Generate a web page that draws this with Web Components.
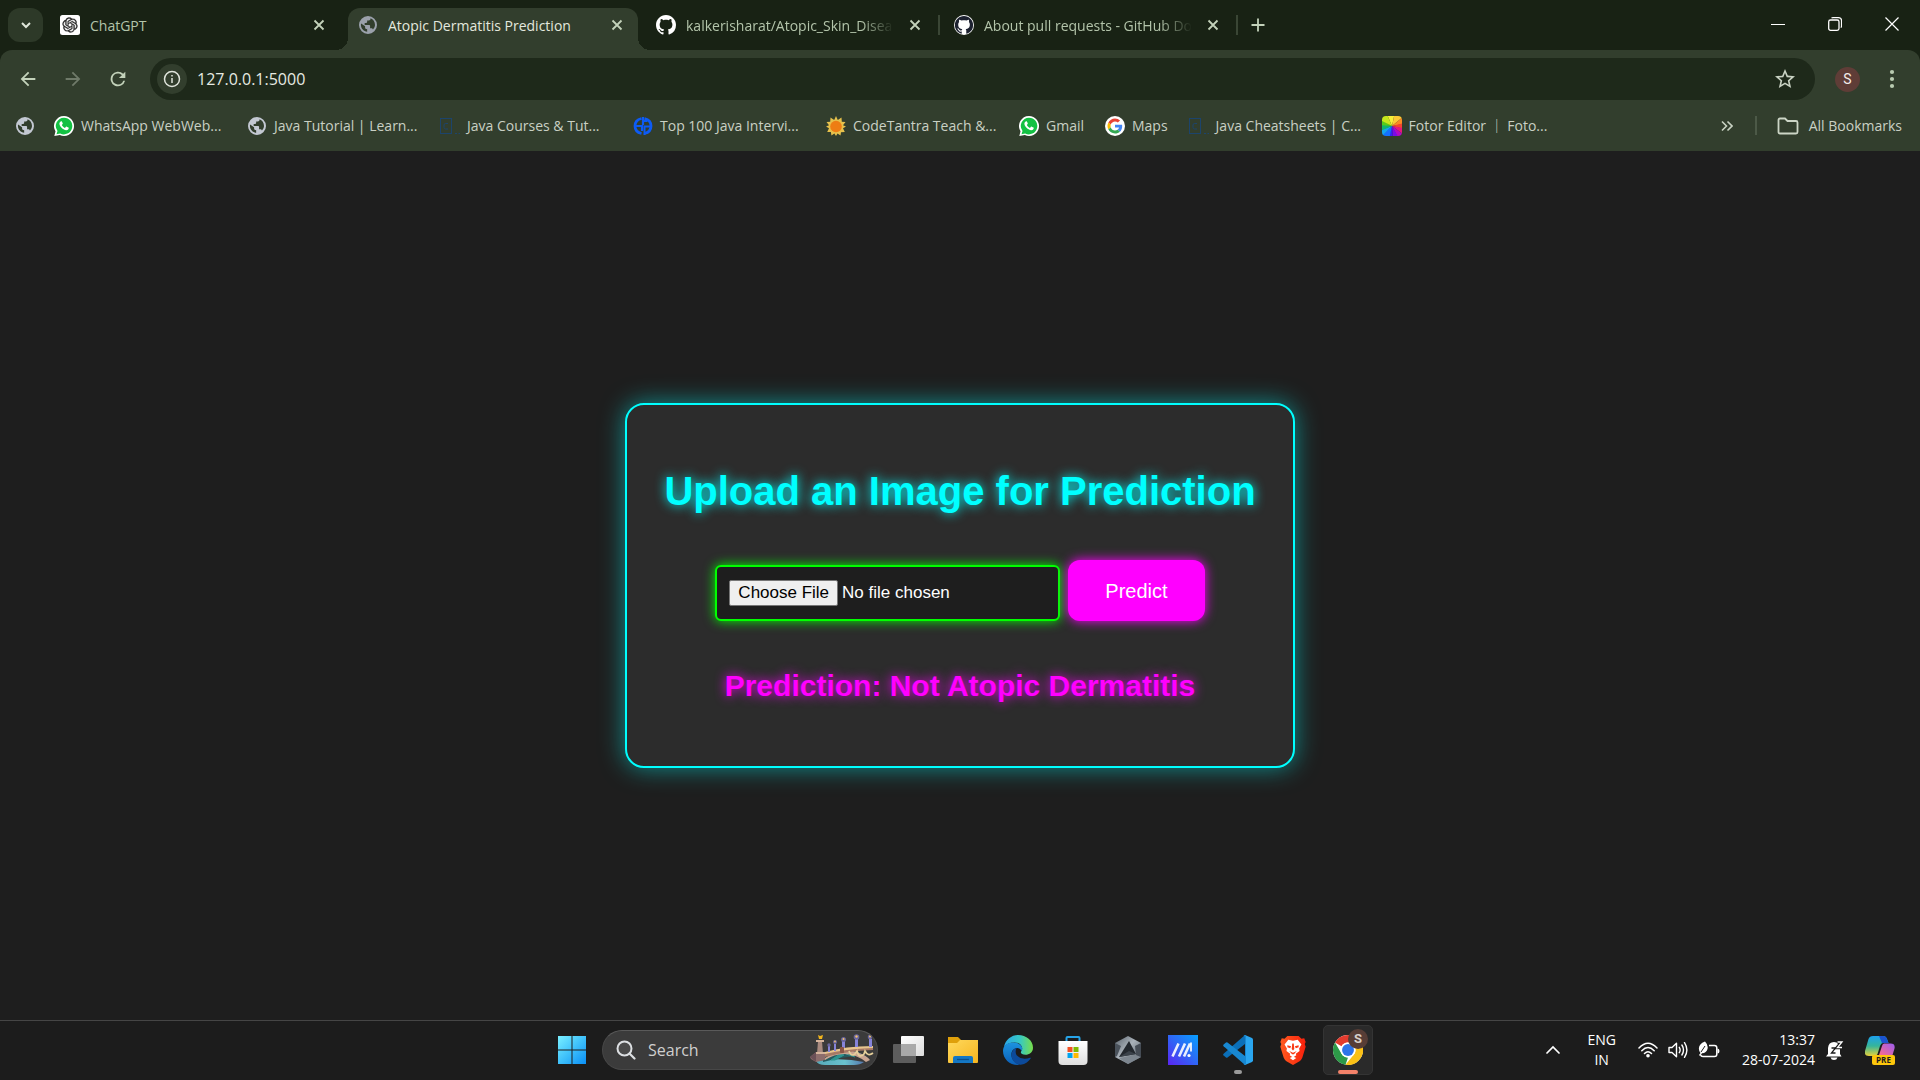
<!DOCTYPE html>
<html lang="en">
<head>
<meta charset="utf-8">
<title>Atopic Dermatitis Prediction</title>
<style>
  html, body { height: 100%; margin: 0; }
  body { background: #1e1e1e; font-family: "Open Sans", "Noto Sans", "Noto Sans CJK SC", sans-serif; font-size: 14px; }
</style>
</head>
<body>
<desktop-screen></desktop-screen>
<script>
const GITHUB = 'M8 0C3.58 0 0 3.58 0 8c0 3.54 2.29 6.53 5.47 7.59.4.07.55-.17.55-.38 0-.19-.01-.82-.01-1.49-2.01.37-2.53-.49-2.69-.94-.09-.23-.48-.94-.82-1.13-.28-.15-.68-.52-.01-.53.63-.01 1.08.58 1.23.82.72 1.21 1.87.87 2.33.66.07-.52.28-.87.51-1.07-1.78-.2-3.64-.89-3.64-3.95 0-.87.31-1.59.82-2.15-.08-.2-.36-1.02.08-2.12 0 0 .67-.21 2.2.82.64-.18 1.32-.27 2-.27.68 0 1.36.09 2 .27 1.53-1.04 2.2-.82 2.2-.82.44 1.1.16 1.92.08 2.12.51.56.82 1.27.82 2.15 0 3.07-1.87 3.75-3.65 3.95.29.25.54.73.54 1.48 0 1.07-.01 1.93-.01 2.2 0 .21.15.46.55.38A8.013 8.013 0 0016 8c0-4.42-3.58-8-8-8z';
const GLOBE = '<path d="M12 1.200a10.800 10.800 0 1 0 0 21.600a10.800 10.800 0 1 0 0-21.600zm-1 19c-3.950-.49-7.500-3.850-7.500-8.200 0-.62.08-1.210.21-1.790L8.500 13.500v1.500c0 1.100.9 2 2.500 2v3.200zm6.900-2.800c-.26-.81-1-1.390-1.900-1.390h-1.500v-3c0-.55-.45-1-1-1H8v-2.500h2c.55 0 1-.45 1-1V6.500h2c1.100 0 2-.9 2-2v-.6c3.300 1.200 5.400 4.500 5.400 8 0 2.080-1.200 4.100-2.500 5.500z"/>';
const ICONS = {
  chevdown: ['0 0 12 12', '<path d="M2 4l4 4 4-4" fill="none" stroke="#dfe6da" stroke-width="2"/>'],
  close: ['0 0 12 12', '<path d="M1.500 1.500l9 9M10.500 1.500l-9 9" stroke="currentColor" stroke-width="1.800"/>'],
  plus: ['0 0 14 14', '<path d="M7 .5v13M.5 7h13" stroke="#c3d2ba" stroke-width="1.800"/>'],
  openai: ['0 0 24 24', '<rect width="24" height="24" rx="3" fill="#fff"/><g transform="translate(3 3) scale(.75)"><path fill="#222" stroke="#222" stroke-width=".5" d="M22.2819 9.8211a5.9847 5.9847 0 0 0-.5157-4.9108 6.0462 6.0462 0 0 0-6.5098-2.9A6.0651 6.0651 0 0 0 4.9807 4.1818a5.9847 5.9847 0 0 0-3.9977 2.9 6.0462 6.0462 0 0 0 .7427 7.0966 5.98 5.98 0 0 0 .511 4.9107 6.051 6.051 0 0 0 6.5146 2.9001A5.9847 5.9847 0 0 0 13.2599 24a6.0557 6.0557 0 0 0 5.7718-4.2058 5.9894 5.9894 0 0 0 3.9977-2.9001 6.0557 6.0557 0 0 0-.7475-7.0729zm-9.022 12.6081a4.4755 4.4755 0 0 1-2.8764-1.0408l.1419-.0804 4.7783-2.7582a.7948.7948 0 0 0 .3927-.6813v-6.7369l2.02 1.1686a.071.071 0 0 1 .038.052v5.5826a4.504 4.504 0 0 1-4.4945 4.4944zm-9.6607-4.1254a4.4708 4.4708 0 0 1-.5346-3.0137l.142.0852 4.783 2.7582a.7712.7712 0 0 0 .7806 0l5.8428-3.3685v2.3324a.0804.0804 0 0 1-.0332.0615L9.74 19.9502a4.4992 4.4992 0 0 1-6.1408-1.6464zM2.3408 7.8956a4.485 4.485 0 0 1 2.3655-1.9728V11.6a.7664.7664 0 0 0 .3879.6765l5.8144 3.3543-2.0201 1.1685a.0757.0757 0 0 1-.071 0l-4.8303-2.7865A4.504 4.504 0 0 1 2.3408 7.872zm16.5963 3.8558L13.1038 8.364 15.1192 7.2a.0757.0757 0 0 1 .071 0l4.8303 2.7913a4.4944 4.4944 0 0 1-.6765 8.1042v-5.6772a.79.79 0 0 0-.407-.667zm2.0107-3.0231l-.142-.0852-4.7735-2.7818a.7759.7759 0 0 0-.7854 0L9.409 9.2297V6.8974a.0662.0662 0 0 1 .0284-.0615l4.8303-2.7866a4.4992 4.4992 0 0 1 6.6802 4.66zM8.3065 12.863l-2.02-1.1638a.0804.0804 0 0 1-.038-.0567V6.0742a4.4992 4.4992 0 0 1 7.3757-3.4537l-.142.0805L8.704 5.459a.7948.7948 0 0 0-.3927.6813zm1.0976-2.3654l2.602-1.4998 2.6069 1.4998v2.9994l-2.5974 1.4997-2.6067-1.4997Z"/></g>'],
  globe: ['0 0 24 24', '<g fill="#c3c8d2">' + GLOBE + '</g>'],
  globedim: ['0 0 24 24', '<g fill="#9ba1ab">' + GLOBE + '</g>'],
  github: ['0 0 16 16', '<path fill="#fff" d="' + GITHUB + '"/>'],
  githubdocs: ['0 0 16 16', '<circle cx="8" cy="8" r="8" fill="#fff"/><g transform="translate(.7 .7) scale(.9125)"><path fill="#1c2130" d="' + GITHUB + '"/></g>'],
  back: ['0 0 24 24', '<path fill="#c3d2ba" d="M20 11H7.830l5.590-5.590L12 4l-8 8 8 8 1.410-1.410L7.830 13H20z"/>'],
  forward: ['0 0 24 24', '<path fill="#6f7a69" d="M4 11h12.170l-5.590-5.590L12 4l8 8-8 8-1.410-1.410L16.170 13H4z"/>'],
  reload: ['0 0 24 24', '<path fill="#c3d2ba" d="M17.650 6.350A8 8 0 1 0 19.730 14h-2.080A6 6 0 1 1 12 6c1.660 0 3.140.69 4.220 1.780L13 11h7V4z"/>'],
  info: ['0 0 18 18', '<circle cx="9" cy="9" r="7.500" fill="none" stroke="#e0e5dc" stroke-width="1.500"/><path d="M9 8v5M9 5v1.600" stroke="#e0e5dc" stroke-width="1.500"/>'],
  star: ['0 0 24 24', '<path fill="#c9d2c3" d="M22 9.240l-7.190-.62L12 2 9.190 8.630 2 9.240l5.460 4.730L5.820 21 12 17.270 18.180 21l-1.630-7.030zM12 15.400l-3.760 2.270 1-4.280-3.320-2.880 4.380-.38L12 6.100l1.710 4.040 4.380.38-3.320 2.880 1 4.280z"/>'],
  dots: ['0 0 22 22', '<g fill="#b9cbb0"><circle cx="11" cy="4" r="2.100"/><circle cx="11" cy="11" r="2.100"/><circle cx="11" cy="18" r="2.100"/></g>'],
  minimize: ['0 0 14 14', '<path d="M0 7.500h14" stroke="#fff" stroke-width="1"/>'],
  restore: ['0 0 14 14', '<rect x=".7" y="3" width="10.300" height="10.300" rx="1.800" fill="none" stroke="#fff" stroke-width="1.300"/><path d="M3.500 1.200q.6-.6 1.500-.6h5.500q3 0 3 3V9q0 1-.7 1.600" fill="none" stroke="#fff" stroke-width="1.200"/>'],
  winclose: ['0 0 14 14', '<path d="M.5.5l13 13M13.500.5l-13 13" stroke="#fff" stroke-width="1.200"/>'],
  whatsapp: ['0 0 24 24', '<path fill="#fff" d="M12 0a12 12 0 1 1-5 22.900L.4 24l1.400-5.800A12 12 0 0 1 12 0z"/><path fill="#13c143" d="M12 2a10 10 0 1 1-4.600 18.900L3 22l1.200-4A10 10 0 0 1 12 2z"/><path fill="#fff" d="M8.400 6.300c.5-.2 1 0 1.200.5l.9 2c.1.3 0 .7-.2.9l-.9 1.100c.9 1.700 2.100 2.800 3.800 3.500l1.100-1.300c.2-.3.6-.3.900-.2l2.100 1c.4.200.5.5.4.900-.3 1.500-1.400 2.400-2.900 2.400-2 0-4.700-1.400-6.300-3.500-1.400-1.700-2.100-3.300-2-4.500.1-1.200.8-2.300 1.900-2.800z"/>'],
  javabox: ['0 0 20 20', '<g fill="none" stroke="#1c446c" stroke-width="1"><rect x=".5" y="2.500" width="11" height="15"/><path d="M8 7.500H5.500q-1.500 0-1.500 1.500v2.500q0 1.500 1.500 1.500H8"/><path d="M15 17.500h2M18.500 17.500h1.500"/></g>'],
  top100: ['0 0 20 20', '<g fill="none" stroke="#0d5bf5" stroke-width="2.800"><path d="M8.500 2.500Q2 4 2 10t6.500 7.500M11.500 2.500Q18 4 18 10t-6.500 7.500"/><path d="M10 1v8M3 10h6v5" stroke-width="2.200"/><path d="M11.500 19v-8.500H17M10.500 5h4" stroke-width="2"/></g>'],
  sun: ['0 0 20 20', '<path fill="#e6c14c" d="M10 0l1.800 4L15.500 1.500l.3 4.200 3.700.3-2.500 3.200L20 10.500l-3 1.800 1.800 3.700-3.800.2-.5 3.300-3-2L10 20l-1.600-2.600-3 2-.5-3.300-3.700-.2L3 12.300 0 10.500l3-1.300L.5 6l3.700-.3.3-4.200L8.200 4z"/><circle cx="10" cy="10.500" r="5.800" fill="#ee7d14"/>'],
  google: ['0 0 48 48', '<circle cx="24" cy="24" r="24" fill="#fff"/><g transform="translate(6 6) scale(.75)"><path fill="#EA4335" d="M24 9.500c3.540 0 6.710 1.220 9.210 3.600l6.850-6.850C35.900 2.380 30.470 0 24 0 14.620 0 6.510 5.380 2.560 13.220l7.980 6.190C12.430 13.720 17.740 9.500 24 9.500z"/><path fill="#4285F4" d="M46.980 24.550c0-1.570-.15-3.090-.38-4.550H24v9.020h12.940c-.58 2.960-2.260 5.480-4.780 7.180l7.730 6c4.510-4.180 7.090-10.360 7.090-17.650z"/><path fill="#FBBC05" d="M10.530 28.590c-.48-1.450-.76-2.990-.76-4.590s.27-3.140.76-4.590l-7.980-6.190C.92 16.460 0 20.120 0 24c0 3.880.92 7.540 2.560 10.780z"/><path fill="#34A853" d="M24 48c6.480 0 11.930-2.130 15.890-5.810l-7.730-6c-2.150 1.450-4.920 2.300-8.160 2.300-6.260 0-11.570-4.220-13.470-9.910l-7.980 6.190C6.510 42.620 14.620 48 24 48z"/></g>'],
  fotor: ['0 0 20 20', '<defs><clipPath id="r"><rect width="20" height="20" rx="4"/></clipPath></defs><g clip-path="url(#r)"><path fill="#f6ee38" d="M10 10L4-4h9z"/><path fill="#fcc935" d="M10 10l3-14h7l2 4z"/><path fill="#fb8b24" d="M10 10L22 0v8z"/><path fill="#f4452f" d="M10 10l12-3v6z"/><path fill="#e5187c" d="M10 10l12 2v7z"/><path fill="#b409c4" d="M10 10l12 9-5 5z"/><path fill="#7a0be8" d="M10 10l8 14h-7z"/><path fill="#3a1cf5" d="M10 10l1 14H6z"/><path fill="#1470ff" d="M10 10L7 24l-9-3z"/><path fill="#14a4f0" d="M10 10L-2 22v-8z"/><path fill="#11b56c" d="M10 10l-12 5V8z"/><path fill="#55cc1c" d="M10 10L-2 9V3z"/><path fill="#c6e71c" d="M10 10L-2 4v-6l6-2z"/></g>'],
  more: ['0 0 12 12', '<path d="M1 1.500L5.500 6 1 10.500M6.500 1.500L11 6l-4.500 4.500" fill="none" stroke="#c9d2c3" stroke-width="1.600"/>'],
  folderline: ['0 0 22 18', '<path d="M1.500 3q0-1.500 1.500-1.500h5L10.500 4H19q1.500 0 1.500 1.500V15q0 1.500-1.500 1.500H3q-1.500 0-1.500-1.500z" fill="none" stroke="#ccd5c6" stroke-width="1.800"/>'],
  windows: ['0 0 30 30', '<defs><linearGradient id="w" x1="0" y1="0" x2="1" y2="1"><stop offset="0" stop-color="#7af0ff"/><stop offset=".5" stop-color="#3fc1fb"/><stop offset="1" stop-color="#0a8ff5"/></linearGradient></defs><path fill="url(#w)" d="M1 1h13.500v13.500H1zM15.500 1H29v13.500H15.500zM1 15.500h13.500V29H1zM15.500 15.500H29V29H15.500z"/>'],
  search: ['0 0 20 20', '<circle cx="8.500" cy="8.500" r="7" fill="#4a4a4a" stroke="#dcdfe2" stroke-width="2"/><path d="M13.500 13.500l5 5" stroke="#dcdfe2" stroke-width="2.200" stroke-linecap="round"/>'],
  bridge: ['0 0 64 32', '<defs><linearGradient id="b" x1="0" x2="1"><stop offset="0" stop-color="#56a9b8"/><stop offset=".6" stop-color="#6ac3cf"/><stop offset="1" stop-color="#5577ae"/></linearGradient></defs><path d="M6 27q26-4 48 1q-4 3-10 3H15q-7 0-9-4z" fill="url(#b)"/><path d="M13 25q14-10 34-8l10 6q-14-3-44 5z" fill="#245b60"/><path d="M21 26l9-6 4 1-9 5zM36 20l9 3" fill="#2e9590" stroke="#2e9590"/><path d="M0 23l6-5h9v8l-9 2-5-3z" fill="#8d6d6c"/><path d="M0 23l6-5v10z" fill="#6b5057"/><path d="M15 24q16-10 32-6 9 3 13 8l-4 2q-10-8-22-8-10 0-19 6z" fill="#c9a592"/><path d="M15 18q20-6 48-6v3q-26 0-48 6z" fill="#e8c58e"/><path d="M15 20q20-5 48-6v2q-26 1-48 7z" fill="#a77964"/><path d="M39 17q2 6 6 3l2-3q2 8 7 3l1-3q3 6 8 2" fill="none" stroke="#e5cf9a" stroke-width="1.700"/><path d="M8 7h4l1 13H7z" fill="#a98a7f"/><path d="M6 6h8v2H6zM6 18h9v2H6z" fill="#d5b39b"/><path d="M8 1l2 1 3-1-1 4H9z" fill="#f2b51d"/><g fill="#8583d8"><path d="M18 12h2v6h-2zM24 10h2v7h-2zM32 7h3v7h-3zM45 5h3v8h-3zM59 5h3v8h-3z"/></g><g fill="#69669f"><circle cx="19" cy="11" r="1.700"/><circle cx="25" cy="8" r="2"/><circle cx="33.500" cy="5.500" r="2.500"/><circle cx="46.500" cy="3" r="2.800"/><circle cx="60" cy="3" r="2.300"/></g><g fill="#f1c06a"><circle cx="25" cy="7.500" r=".9"/><circle cx="33.500" cy="5" r="1"/><circle cx="46.500" cy="2.500" r="1.200"/><circle cx="60" cy="2.500" r="1"/></g><rect x="30" y="13" width="4" height="6" rx="1" fill="#8a5546"/>'],
  taskview: ['0 0 32 32', '<defs><linearGradient id="t" x1="0" y1="0" x2="1" y2="1"><stop offset="0" stop-color="#fff"/><stop offset="1" stop-color="#dcdcdc"/></linearGradient></defs><rect x="9" y="2" width="23" height="20" rx="1" fill="url(#t)"/><rect x="1" y="10" width="23" height="19" rx="1" fill="#5d5d5d"/><path d="M9 10h15v12H9z" fill="#a9a9a9"/>'],
  explorer: ['0 0 30 30', '<defs><linearGradient id="e" x1="0" y1="0" x2="1" y2="1"><stop offset="0" stop-color="#ffd95c"/><stop offset="1" stop-color="#f6b520"/></linearGradient></defs><path fill="#dfa00b" d="M0 2h10l3 3v6H0z"/><path fill="url(#e)" d="M0 8h9l3-3h18v22q0 1-1 1H1q-1 0-1-1z"/><path fill="#1477c4" d="M5 28v-5q0-2 2-2h16q2 0 2 2v5z"/><path d="M9 24.500h12" stroke="#0a4f8d" stroke-width="1.300"/>'],
  edge: ['0 0 32 32', '<defs><linearGradient id="g1" x1="0" x2="1"><stop offset="0" stop-color="#2aa5e8"/><stop offset=".55" stop-color="#36c8c4"/><stop offset="1" stop-color="#78de4a"/></linearGradient><linearGradient id="g2" x1="0" y1="0" x2="0" y2="1"><stop offset="0" stop-color="#1c93df"/><stop offset="1" stop-color="#0b5fb8"/></linearGradient></defs><path fill="url(#g1)" d="M1 13C2.500 5 9 0 16 0c9 0 16 6 16 13.500 0 5-4 7.500-8 7.500-3 0-5-1.200-5-2.500 0-1 1.500-1.500 1.500-4 0-3.500-3.500-6.500-8-6.500C7 8 3 10 1 13z"/><path fill="url(#g2)" d="M0 17C0 11 5 8 11 8c5 0 9.500 3 9.500 6.500 0 1-.3 2-1 2.500C18 12 9 13 9 21c0 5 4 9 9 10.800C8 33 0 26 0 17z"/><path fill="#0c4a9a" d="M15 13.500c-4 1-6 4-6 7.500 0 6 5 11 10 10.700 5-.7 8.500-3.600 10.500-6.700.4-.7-.2-1-.7-.7C22 27 14 24.500 13.500 18c0-2 .5-3.500 1.500-4.500z"/>'],
  store: ['0 0 30 30', '<defs><linearGradient id="s" x1="0" y1="0" x2="0" y2="1"><stop offset="0" stop-color="#fff"/><stop offset="1" stop-color="#dedede"/></linearGradient></defs><path d="M8.500 7V3q0-1 1-1h11q1 0 1 1v4" fill="none" stroke="#27a4e8" stroke-width="2"/><path fill="url(#s)" d="M.5 6h29v20q0 4-4 4h-21q-4 0-4-4z"/><path fill="#f25022" d="M9.500 12h5v5h-5z"/><path fill="#7fba00" d="M15.500 12h5v5h-5z"/><path fill="#00a4ef" d="M9.500 18h5v5h-5z"/><path fill="#ffb900" d="M15.500 18h5v5h-5z"/>'],
  armoury: ['0 0 28 28', '<defs><linearGradient id="a" x1="0" y1="0" x2="1" y2="1"><stop offset="0" stop-color="#59626b"/><stop offset=".45" stop-color="#aab2ba"/><stop offset="1" stop-color="#4a525b"/></linearGradient></defs><path fill="url(#a)" d="M14 0l13 7v14l-13 7-13-7V7z"/><path fill="#4a525b" d="M1 7l6 3-4 10-2 1z"/><path fill="#23282e" d="M15 5l7 13-17 3z"/><path fill="#3b424a" d="M5 21l10-6 7 3z"/><path fill="#7d868f" d="M5 22l17-3 5 2-13 7z"/><path fill="#454c55" d="M21 10l6-3v14l-5-2z"/>'],
  myasus: ['0 0 30 30', '<defs><linearGradient id="m" x1="0" y1="1" x2="1" y2="0"><stop offset="0" stop-color="#5b24f2"/><stop offset=".55" stop-color="#2b6cf6"/><stop offset="1" stop-color="#06a0ff"/></linearGradient></defs><path fill="url(#m)" d="M0 0h30v30H0z"/><path d="M4.500 21.500l6-13M11 21.500l6-13M16 21.500l6-13" stroke="#fff" stroke-width="2.600" opacity=".9"/><path d="M22 7.500h2v9h-2z" fill="#fff" opacity=".85"/><circle cx="21" cy="20.500" r="1.600" fill="#fff"/>'],
  vscode: ['0 0 30 30', '<path fill="#0b6fb8" d="M22 0v9L4.500 22.500q-.8.5-1.500 0L.6 20.600q-.9-.9 0-1.800z"/><path fill="#1888d2" d="M22 30v-9L4.500 7.500Q3.700 7 3 7.500L.6 9.400q-.9.900 0 1.800z"/><path fill="#2aa6f0" d="M22 0l7 3q1 .5 1 1.700v20.600q0 1.200-1 1.700l-7 3z"/><path fill="#1888d2" d="M20.500 29.500Q22 29 22 27V3q0-2-1.500-2.500L22 0l1 1v28l-1 1z"/>'],
  brave: ['0 0 28 32', '<defs><linearGradient id="v" x1="0" x2="1"><stop offset="0" stop-color="#ff5a1f"/><stop offset="1" stop-color="#f8200c"/></linearGradient></defs><path fill="url(#v)" d="M8 1h12l3 3 3-.5 1.500 4-1 2 1 3L24 24q-1 2.500-3 4l-7 4-7-4q-2-1.500-3-4L.5 12.500l1-3-1-2L2 3.500 5 4z"/><path fill="#fff" d="M14 6l5-1 4 5-2.500 4.500.5 2.500-4 3 .5 1.500L14 24l-3.500-2.500.5-1.500-4-3 .5-2.500L5 10l4-5z"/><path fill="#f93a14" d="M8 11l4 1-1 2-3-1zM20 11l-4 1 1 2 3-1zM13.200 9h1.600l.6 6-1.400 1.500-1.400-1.500zM10 17l4 2 4-2-3 3.500h-2z"/><path fill="#fff" d="M10.500 24.500l3.500-1.500 3.500 1.500L14 27z"/>'],
  chrome: ['0 0 48 48', '<circle cx="24" cy="24" r="24" fill="#fff"/><path fill="#e33b2e" d="M24 0a24 24 0 0 1 20.800 12H24a12 12 0 0 0-10.400 6L3.200 12A24 24 0 0 1 24 0z"/><path fill="#2d9a48" d="M3.200 12l10.400 18A12 12 0 0 0 24 36l-4 11.700A24 24 0 0 1 3.200 12z"/><path fill="#fbc116" d="M44.800 12A24 24 0 0 1 20 47.700L34.400 30a12 12 0 0 0 0-12L32 12z"/><circle cx="24" cy="24" r="12" fill="#fff"/><circle cx="24" cy="24" r="9.500" fill="#2d74ea"/>'],
  chevup: ['0 0 14 14', '<path d="M1 10l6-6 6 6" fill="none" stroke="#fff" stroke-width="1.700" stroke-linecap="round"/>'],
  wifi: ['0 0 20 16', '<g fill="none" stroke="#fff" stroke-width="1.500" stroke-linecap="round"><path d="M1 6q9-9.500 18 0M3.800 8.800q6.200-6.500 12.400 0M6.500 11.500q3.500-3.500 7 0"/></g><circle cx="10" cy="13.800" r="1.800" fill="#fff"/>'],
  speaker: ['0 0 20 18', '<g fill="none" stroke="#fff" stroke-width="1.400" stroke-linecap="round" stroke-linejoin="round"><path d="M1 6.500h3l4.500-4.300v13.600L4 11.500H1zM11.300 6.300q1.700 2.700 0 5.400M13.900 4q3.200 5 0 10M16.500 1.700q4.800 7.300 0 14.600"/></g>'],
  battery: ['0 0 22 18', '<path d="M11 4.500h5.500q2.300 0 2.300 2.300v6.400q0 2.300-2.300 2.300H5Q3 15.500 2.700 14" fill="none" stroke="#fff" stroke-width="1.500"/><path d="M19.500 7.500q2 0 2 2.500t-2 2.500z" fill="#fff"/><path d="M1 14l1.500-2Q-.5 8 2 4q2-3 5-3.500Q10.500 4 9.500 8T4 12.300L2 15z" fill="#fff"/><path d="M3 11l4-6" stroke="#1c1c1c"/>'],
  bell: ['0 0 20 20', '<path fill="#fff" d="M3 8Q3.500 2 9 2t6 6v6l1.500 2.500H1L3 14zM5.500 17.500h7q-.8 2.500-3.500 2.500t-3.500-2.500z"/><path d="M6.500 8h4l-4 5h4" fill="none" stroke="#1c1c1c" stroke-width="1.300"/><path d="M12.500 2h4.500l-4.500 5.500h4.500" fill="none" stroke="#1c1c1c" stroke-width="3.600"/><path d="M12.500 2h4.500l-4.500 5.500h4.500" fill="none" stroke="#fff" stroke-width="1.300"/>'],
  copilot: ['0 0 30 30', '<defs><linearGradient id="c1" x1="0" y1="0" x2="0" y2="1"><stop offset="0" stop-color="#1da1ee"/><stop offset=".5" stop-color="#35b59a"/><stop offset="1" stop-color="#e8d13a"/></linearGradient><linearGradient id="c2" x1="1" y1="0" x2="0" y2="1"><stop offset="0" stop-color="#9a5df0"/><stop offset="1" stop-color="#fb6a8c"/></linearGradient></defs><path d="M8 1h10q3 0 4 3l1.500 4H18q-2 0-3 3l-2.500 8q-.8 2-3 2H4q-5 0-4-5L3.500 4Q4.500 1 8 1z" fill="url(#c1)"/><path d="M14 1h4q3 0 4 3l1.500 4H17z" fill="#1b53cf"/><path d="M19 8.500h6.500q5 0 4 5L27.500 20H14l3-9q.6-2.500 2-2.500z" fill="url(#c2)"/>']
};

/* Base class: renders a component's template into its open shadow root. */
class Component extends HTMLElement {
  connectedCallback() {
    if (this.shadowRoot) return;
    const t = document.createElement('template');
    t.innerHTML = '<style>:host{box-sizing:border-box}*,*::before,*::after{box-sizing:border-box}button,input{font:inherit;color:inherit;margin:0}button{border:0;background:none;padding:0;display:grid;place-items:center}a{color:inherit;text-decoration:none}' + this.css() + '</style>' + this.html();
    this.attachShadow({ mode: 'open' }).append(t.content.cloneNode(true));
  }
  css() { return ''; }
  html() { return ''; }
}

customElements.define('ui-icon', class extends Component {
  css() { return ':host{display:block;flex:none}svg{display:block}'; }
  html() {
    const [box, body] = ICONS[this.getAttribute('name')];
    const w = this.getAttribute('w'), h = this.getAttribute('h') || w;
    return `<svg viewBox="${box}" width="${w}" height="${h}" aria-hidden="true">${body}</svg>`;
  }
});

customElements.define('browser-tab', class extends Component {
  css() { return `
    :host{display:flex;flex:0 1 298px;min-width:0;height:42px;align-items:center;color:#b3c4aa}
    .tab{position:relative;flex:1;min-width:0;height:42px;display:flex;align-items:center;padding:0 15px 8px 10px;gap:10px;border-radius:12px 12px 0 0}
    a{flex:1;min-width:0;display:flex;align-items:center;gap:10px}
    .title{flex:1;min-width:0;overflow:hidden;white-space:nowrap;line-height:20px;padding-top:2px;margin-right:5px}
    :host([fade]) .title{-webkit-mask:linear-gradient(90deg,#000 84%,transparent);mask:linear-gradient(90deg,#000 84%,transparent)}
    i{width:2px;height:20px;margin:0 4px 8px 2px;background:transparent}
    :host([divider]) i{background:#3a4635}
    :host([active]){color:#e3e8de}
    :host([active]) .tab{background:#323e2d}
    :host([active]) .tab::before,:host([active]) .tab::after{content:"";position:absolute;bottom:0;width:12px;height:12px}
    :host([active]) .tab::before{left:-12px;background:radial-gradient(circle at 0 0,transparent 12px,#323e2d 12px)}
    :host([active]) .tab::after{right:-12px;background:radial-gradient(circle at 100% 0,transparent 12px,#323e2d 12px)}
    button{color:#c3d2ba}`; }
  html() { return `<div class="tab"><a href="#"><ui-icon name="${this.getAttribute('icon')}" w="20"></ui-icon><span class="title"><slot></slot></span></a><button aria-label="Close tab"><ui-icon name="close" w="12"></ui-icon></button></div><i></i>`; }
});

customElements.define('tab-strip', class extends Component {
  css() { return `
    :host{display:flex;height:50px;background:#182214;padding-left:8px}
    .find{width:35px;height:34px;border-radius:12px;background:#2d3928;margin:8px 7px 0 0}
    .tabs{display:flex;flex:1;min-width:0;padding-top:8px}
    .add{margin-left:9px;height:34px}
    .win{display:flex}.win button{width:57px;height:48px}`; }
  html() { return `
    <button class="find" aria-label="Search tabs"><ui-icon name="chevdown" w="12"></ui-icon></button>
    <nav class="tabs">
      <browser-tab icon="openai">ChatGPT</browser-tab>
      <browser-tab icon="globedim" active>Atopic Dermatitis Prediction</browser-tab>
      <browser-tab icon="github" divider fade>kalkerisharat/Atopic_Skin_Disea</browser-tab>
      <browser-tab icon="githubdocs" divider fade>About pull requests - GitHub Docs</browser-tab>
      <button class="add" aria-label="New tab"><ui-icon name="plus" w="14"></ui-icon></button>
    </nav>
    <div class="win"><button aria-label="Minimize"><ui-icon name="minimize" w="14"></ui-icon></button><button aria-label="Restore"><ui-icon name="restore" w="14"></ui-icon></button><button aria-label="Close"><ui-icon name="winclose" w="14"></ui-icon></button></div>`; }
});

customElements.define('address-bar', class extends Component {
  css() { return `
    :host{display:flex;align-items:center;padding:8px 17px 0}
    .nav{display:flex;gap:23px;margin-right:21px}
    .box{flex:1;display:flex;align-items:center;height:42px;border-radius:21px;background:#1e291a;padding:0 18px 0 7px}
    .info{width:30px;height:30px;border-radius:50%;background:#323e2d}
    input{flex:1;min-width:0;border:0;outline:0;background:none;padding:0 10px;font-size:16px;line-height:24px;color:#e6eae2}
    .me{width:25px;height:25px;border-radius:50%;background:#5f3d37;color:#f4ebe9;font:14px/25px Roboto,sans-serif;margin:0 21px 0 20px}`; }
  html() { return `
    <div class="nav"><button aria-label="Back"><ui-icon name="back" w="22"></ui-icon></button><button aria-label="Forward"><ui-icon name="forward" w="22"></ui-icon></button><button aria-label="Reload"><ui-icon name="reload" w="22"></ui-icon></button></div>
    <div class="box"><button class="info" aria-label="Site information"><ui-icon name="info" w="18"></ui-icon></button><input type="text" aria-label="Address" value="127.0.0.1:5000"><button aria-label="Bookmark this page"><ui-icon name="star" w="24"></ui-icon></button></div>
    <button class="me">S</button><button aria-label="Menu"><ui-icon name="dots" w="22"></ui-icon></button>`; }
});

customElements.define('bookmark-link', class extends Component {
  css() { return `
    :host{display:block;flex:none;color:#c9d0c4}
    :host([wide]){width:172px}
    a{display:flex;align-items:center;gap:7px;white-space:nowrap;line-height:20px}
    :host([folder]) a{gap:10px}`; }
  html() { return `<a href="#"><ui-icon name="${this.getAttribute('icon')}" w="${this.getAttribute('w') || 20}" h="${this.getAttribute('h') || ''}"></ui-icon><span><slot></slot></span></a>`; }
});

customElements.define('bookmarks-bar', class extends Component {
  css() { return `
    :host{display:flex;align-items:center;height:51px;padding:0 18px 0 15px}
    .list{display:flex;gap:21px;flex:1;min-width:0}
    .solo{width:18px}
    i{width:2px;height:19px;background:#4c5947;margin:0 20px 0 22px}`; }
  html() { return `
    <nav class="list">
      <bookmark-link class="solo" icon="globe" aria-label="Bookmark"></bookmark-link>
      <bookmark-link wide icon="whatsapp">WhatsApp WebWeb...</bookmark-link>
      <bookmark-link wide icon="globe">Java Tutorial | Learn...</bookmark-link>
      <bookmark-link wide icon="javabox">Java Courses &amp; Tut...</bookmark-link>
      <bookmark-link wide icon="top100">Top 100 Java Intervi...</bookmark-link>
      <bookmark-link wide icon="sun">CodeTantra Teach &amp;...</bookmark-link>
      <bookmark-link icon="whatsapp">Gmail</bookmark-link>
      <bookmark-link icon="google">Maps</bookmark-link>
      <bookmark-link wide icon="javabox">Java Cheatsheets | C...</bookmark-link>
      <bookmark-link wide icon="fotor">Fotor Editor ｜ Foto...</bookmark-link>
    </nav>
    <button aria-label="More bookmarks"><ui-icon name="more" w="12"></ui-icon></button><i></i>
    <bookmark-link folder icon="folderline" w="22" h="18">All Bookmarks</bookmark-link>`; }
});

customElements.define('browser-chrome', class extends Component {
  css() { return ':host{display:block;background:#182214}.bars{background:#323e2d;border-radius:12px 12px 0 0}'; }
  html() { return '<tab-strip></tab-strip><div class="bars"><address-bar></address-bar><bookmarks-bar></bookmarks-bar></div>'; }
});

customElements.define('prediction-card', class extends Component {
  css() { return `
    :host{display:block;padding:38px 37px;background:#2c2c2c;border:2px solid #0ff;border-radius:19px;box-shadow:0 0 25px rgba(0,255,255,.5);font-family:"Liberation Sans",Arial,sans-serif;text-align:center;color:#fff}
    h1{margin:25px 0 46px;font-size:40px;line-height:46px;color:#0ff;text-shadow:0 0 12px #0ff}
    form{display:flex;justify-content:center;align-items:flex-end;gap:8px}
    input{width:345px;height:56px;padding:12px;border:2px solid #0f0;border-radius:6px;background:#1e1e1e;color:#fff;font-size:17px;line-height:27px;box-shadow:0 0 12px #0f0}
    input::file-selector-button{font:inherit;line-height:20px;padding:2px 8px;border:1px solid #767676;border-radius:2px;background:#efefef;color:#000;margin:0 4px 0 0}
    button{padding:0 37px;height:61px;border-radius:12px;background:#f0f;color:#fff;font-size:20px;line-height:24px;box-shadow:0 0 12px #f0f}
    h2{margin:48px 0 25px;font-size:30px;line-height:34px;color:#f0f;text-shadow:0 0 12px #f0f}`; }
  html() { return `
    <h1>Upload an Image for Prediction</h1>
    <form><input type="file" aria-label="Image file"><button type="button">Predict</button></form>
    <h2>Prediction: Not Atopic Dermatitis</h2>`; }
});

customElements.define('task-app', class extends Component {
  css() { return `
    :host{display:block;width:50px;height:50px}
    button{position:relative;width:50px;height:50px;border-radius:5px;border:1px solid transparent}
    :host([active]) button{background:#2a2a2a;border-color:#343434}
    :host([active]) button::after,:host([running]) button::after{content:"";position:absolute;bottom:0;left:50%;margin-left:-4px;width:8px;height:4px;border-radius:2px;background:#9a9a9a}
    :host([active]) button::after{margin-left:-10px;width:20px;background:#f3826a}
    .badge{position:absolute;right:4px;top:3px;width:20px;height:20px;border-radius:50%;background:#573d36;color:#d8cfcb;font:bold 13px/20px Roboto,sans-serif}`; }
  html() {
    const b = this.getAttribute('badge');
    return `<button aria-label="${this.getAttribute('label')}"><ui-icon name="${this.getAttribute('icon')}" w="${this.getAttribute('w') || 30}"></ui-icon>${b ? `<span class="badge">${b}</span>` : ''}</button>`;
  }
});

customElements.define('search-pill', class extends Component {
  css() { return `
    :host{display:flex;align-items:center;width:276px;height:40px;border-radius:20px;background:#3b3b3b;border:1px solid #474747;border-top-color:#5a5a5a;padding:0 3px 0 13px;overflow:hidden}
    input{flex:1;min-width:0;border:0;outline:0;background:none;padding:0 0 0 12px;font-size:16px;line-height:24px;color:#cfcfcf}
    input::placeholder{color:#cfcfcf;opacity:1}`; }
  html() { return '<ui-icon name="search" w="20"></ui-icon><input type="text" aria-label="Search" placeholder="Search"><ui-icon name="bridge" w="64" h="32"></ui-icon>'; }
});

customElements.define('system-tray', class extends Component {
  css() { return `
    :host{display:flex;align-items:center;justify-content:flex-end;color:#fff;line-height:20px;padding-right:25px}
    .lang{margin:0 22px 0 27px;text-align:center}
    .status{display:flex;align-items:center;gap:10px;margin-right:22px}
    .clock{text-align:right;margin-right:10px}
    .bell{margin-right:20px}
    .co{position:relative}
    .co b{position:absolute;right:0;bottom:0;width:23px;height:10px;border-radius:2px;background:#fdc60b;color:#1c1c1c;font:bold 8px/10px "Open Sans",sans-serif;text-align:center}`; }
  html() { return `
    <button aria-label="Hidden icons"><ui-icon name="chevup" w="14"></ui-icon></button>
    <div class="lang"><div>ENG</div><div>IN</div></div>
    <div class="status"><ui-icon name="wifi" w="20" h="16"></ui-icon><ui-icon name="speaker" w="20" h="18"></ui-icon><ui-icon name="battery" w="22" h="18"></ui-icon></div>
    <div class="clock"><div>13:37</div><div>28-07-2024</div></div>
    <button class="bell" aria-label="Notifications"><ui-icon name="bell" w="20"></ui-icon></button>
    <button class="co" aria-label="Copilot"><ui-icon name="copilot" w="30"></ui-icon><b>PRE</b></button>`; }
});

customElements.define('task-bar', class extends Component {
  css() { return `
    :host{display:grid;grid-template-columns:1fr auto 1fr;align-items:center;height:60px;background:#1c1c1c;border-top:1px solid #454545;padding-bottom:1px}
    .apps{grid-column:2;display:flex;align-items:center;gap:5px}`; }
  html() { return `
    <div class="apps">
      <task-app icon="windows" label="Start"></task-app>
      <search-pill></search-pill>
      <task-app icon="taskview" w="32" label="Task view"></task-app>
      <task-app icon="explorer" label="File Explorer"></task-app>
      <task-app icon="edge" label="Edge"></task-app>
      <task-app icon="store" label="Store"></task-app>
      <task-app icon="armoury" w="28" label="Armoury Crate"></task-app>
      <task-app icon="myasus" label="MyASUS"></task-app>
      <task-app icon="vscode" running label="Visual Studio Code"></task-app>
      <task-app icon="brave" label="Brave"></task-app>
      <task-app icon="chrome" active badge="S" label="Chrome"></task-app>
    </div>
    <system-tray></system-tray>`; }
});

customElements.define('desktop-screen', class extends Component {
  css() { return `
    :host{display:flex;flex-direction:column;min-height:100vh}
    main{flex:1;display:flex;align-items:center;justify-content:center;background:#1e1e1e}`; }
  html() { return '<browser-chrome></browser-chrome><main><prediction-card></prediction-card></main><task-bar></task-bar>'; }
});
</script>
</body>
</html>
